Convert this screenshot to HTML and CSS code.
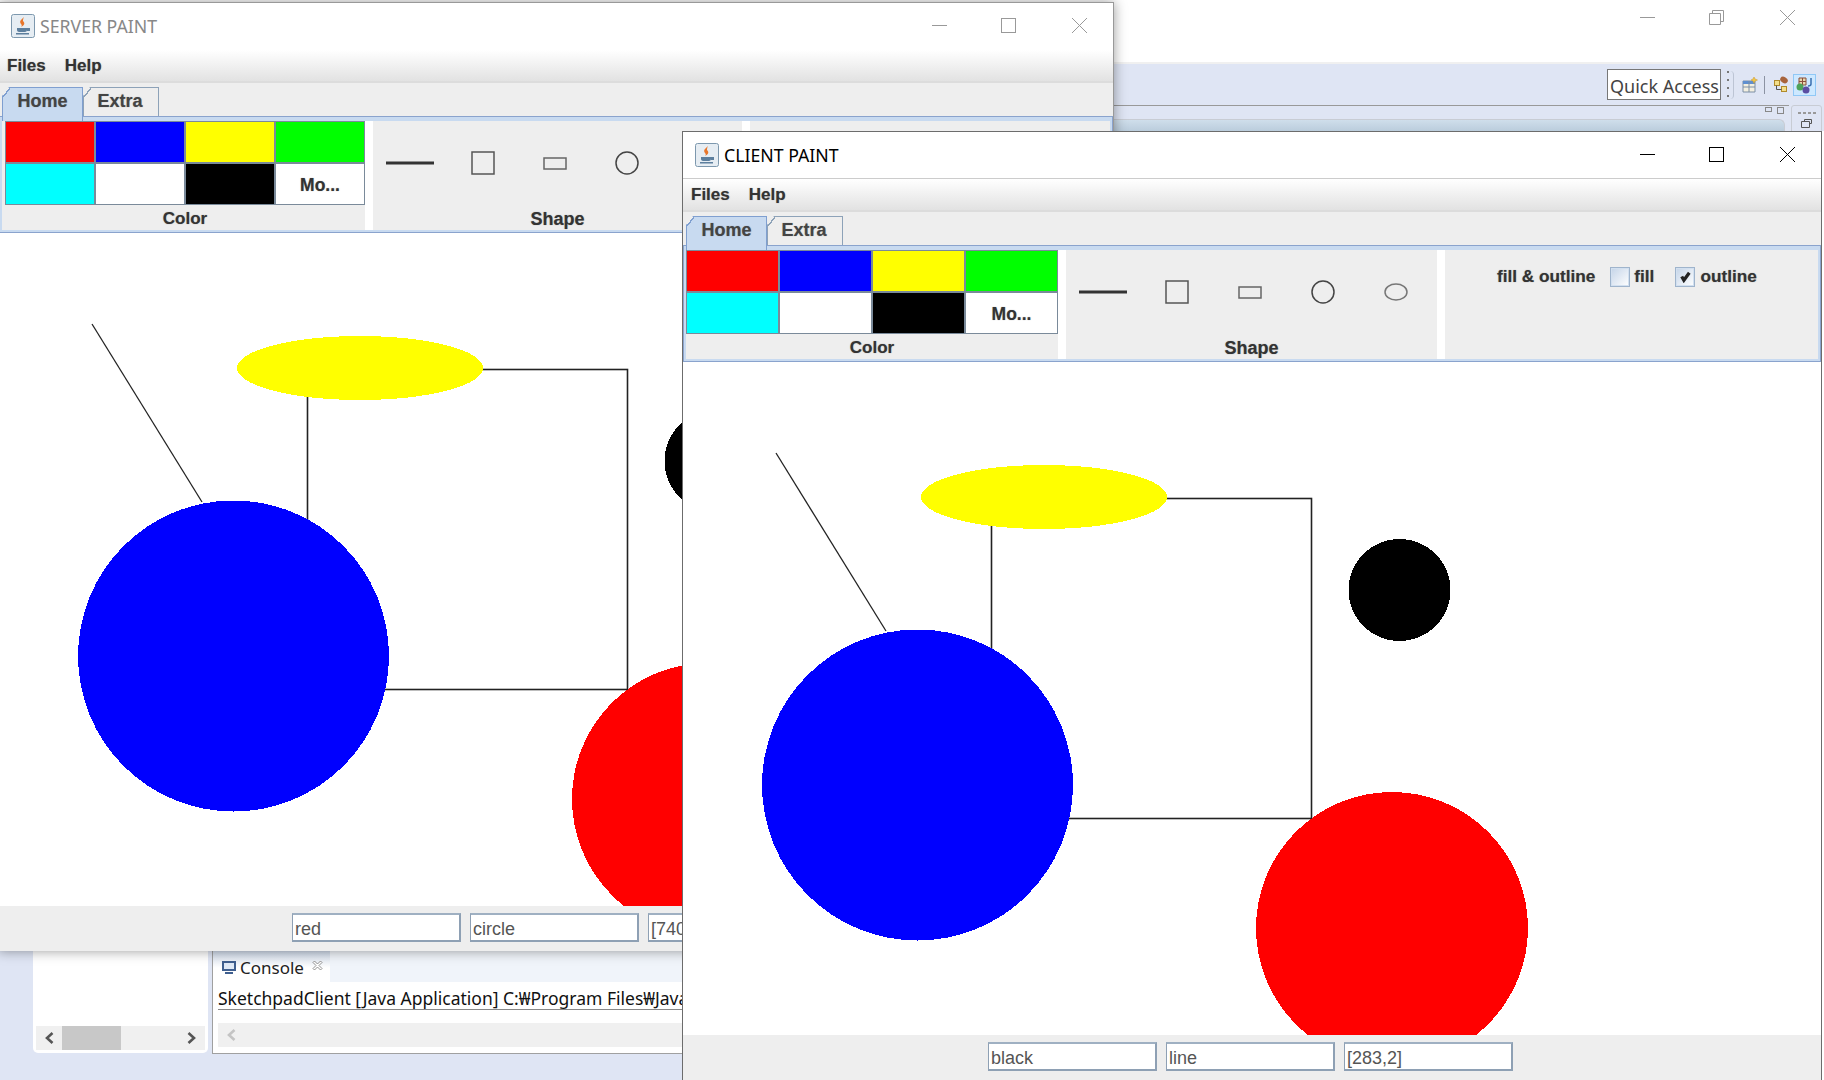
FILE: index.html
```html
<!DOCTYPE html>
<html lang="en">
<head>
    <meta charset="UTF-8">
    <title>Paint</title>
    <link rel="stylesheet" href="styles.css">
</head>
<body>
    <svg class="defs" width="0" height="0">
        <defs>
            <symbol id="drawing" viewBox="0 0 1140 673">
                <line x1="93" y1="91" x2="203" y2="269" stroke="#222" stroke-width="1.300"/>
                <rect x="308.500" y="136.500" width="320" height="320" fill="none" stroke="#222" stroke-width="1.600"/>
                <g shape-rendering="crispEdges">
                    <ellipse cx="361" cy="135" rx="123" ry="32" fill="#ffff00"/>
                    <circle cx="716.500" cy="228" r="51" fill="#000"/>
                    <circle cx="234.500" cy="423" r="155.500" fill="#0000ff"/>
                    <circle cx="709" cy="566" r="136" fill="#ff0000"/>
                </g>
            </symbol>
            <symbol id="java" viewBox="0 0 24 24">
                <rect x="0.500" y="0.500" width="23" height="23" rx="2" fill="#e6edf3" stroke="#7d98ae"/>
                <path d="M13 3c-3 3-5 4-3 7 1 1 1 2 0 3 4-2 4-4 2-6 0-1 0-2 1-4z" fill="#e8762b"/>
                <path d="M6 14h10v2c0 1-1 2-2 2H8c-1 0-2-1-2-2z M5 19h13v1.500H5z M16 14h3v3h-3" fill="#5d7f9e"/>
            </symbol>
            <symbol id="chev" viewBox="0 0 9 12">
                <path d="M7.500 1L2 6l5.500 5" fill="none" stroke="currentColor" stroke-width="2.600"/>
            </symbol>
        </defs>
    </svg>

    <!-- eclipse behind the two frames -->
    <div class="ide">
        <div class="ide-title">
            <span class="wbtn"><svg width="15" height="15"><line x1="0" y1="7.500" x2="15" y2="7.500" stroke="#999"/></svg></span>
            <span class="wbtn"><svg width="15" height="15"><path d="M3.500 3.500V.5h11v11h-3M.5 3.500h11v11H.5z" fill="none" stroke="#999"/></svg></span>
            <span class="wbtn"><svg width="15" height="15"><path d="M0 0l15 15M15 0L0 15" stroke="#999"/></svg></span>
        </div>
        <div class="ide-toolbar">
            <div class="quick">Quick Access</div>
            <span class="grip"></span>
            <svg class="tool" width="16" height="16" viewBox="0 0 16 16"><path d="M1 4h12v11H1z" fill="#f3efe0" stroke="#7d8fa5"/><path d="M1 4h12v3H1z" fill="#5f8fd0"/><path d="M7 4v11M1 10h12" stroke="#7d8fa5"/><path d="M12 0l1 2 2.500 1-2.500 1-1 2.500-1-2.500-2-1 2-1z" fill="#f2c744" stroke="#c9952a" stroke-width="0.500"/></svg>
            <span class="tool-sep"></span>
            <svg class="tool tool-tree" width="16" height="16" viewBox="0 0 16 16"><rect x="2.500" y="4.500" width="5" height="5" fill="#f3df8b" stroke="#b08a2c"/><rect x="9.500" y="10.500" width="5" height="5" fill="#f3df8b" stroke="#b08a2c"/><path d="M4.500 9.500v4h5" fill="none" stroke="#555"/><ellipse cx="12" cy="4" rx="4" ry="3" fill="#a8643c" transform="rotate(30 12 4)"/></svg>
            <span class="tool-on"><svg width="18" height="18" viewBox="0 0 18 18"><path d="M3 2h7v7H3z" fill="#e7d9b0" stroke="#8a4f3a"/><path d="M6.500 2v7M3 5.500h7" stroke="#8a4f3a"/><circle cx="4" cy="11" r="3.500" fill="#4ea35a"/><circle cx="10" cy="14" r="3.500" fill="#5a4ea3"/><path d="M15 2v6c0 2-2 2-3 2" fill="none" stroke="#3a6fb0" stroke-width="1.500"/></svg></span>
        </div>
        <div class="ide-rest">
            <div class="ide-side">
                <div class="side-dots"></div>
                <svg width="12" height="9" viewBox="0 0 12 9"><path d="M3.500 2.500V.5h7v4h-2M.5 2.500h8v6h-8z" fill="none" stroke="#555"/></svg>
            </div>
            <div class="ide-head">
                <span class="mini mini-min"></span>
                <span class="mini mini-max"></span>
            </div>
            <div class="ide-band"></div>
        </div>

        <div class="pkg">
            <div class="pkg-fill"></div>
            <div class="hscroll pkg-scroll">
                <span class="arrow"><svg width="9" height="12"><use href="#chev"/></svg></span>
                <span class="thumb"></span>
                <span class="arrow arrow-right"><svg width="9" height="12"><use href="#chev"/></svg></span>
            </div>
        </div>
        <div class="console">
            <div class="console-tabs">
                <div class="console-tab">
                    <svg width="14" height="14" viewBox="0 0 14 14"><rect x="1" y="1" width="12" height="8" fill="#dfe9f6" stroke="#3f5f8f" stroke-width="2"/><path d="M3 11h8v2H3z" fill="#3f5f8f"/></svg>
                    <span>Console</span>
                    <svg class="tab-x" width="11" height="11" viewBox="0 0 11 11"><path d="M1 2.500L2.500 1l3 3 3-3L10 2.500l-3 3 3 3L8.500 10l-3-3-3 3L1 8.500l3-3z" fill="#fff" stroke="#777" stroke-width="0.800"/></svg>
                </div>
            </div>
            <div class="console-name">SketchpadClient [Java Application] C:&#8361;Program Files&#8361;Java</div>
            <div class="hscroll console-scroll"><span class="arrow arrow-off"><svg width="9" height="12"><use href="#chev"/></svg></span></div>
        </div>
    </div>

    <!-- server frame -->
    <div class="frame frame-server">
        <div class="titlebar">
            <svg class="java" width="24" height="24"><use href="#java"/></svg>
            <span class="title">SERVER PAINT</span>
            <span class="wbtns">
                <span class="wbtn"><svg width="15" height="15"><line x1="0" y1="7.500" x2="15" y2="7.500" stroke="#999"/></svg></span>
                <span class="wbtn"><svg width="15" height="15"><rect x="0.500" y="0.500" width="14" height="14" fill="none" stroke="#999"/></svg></span>
                <span class="wbtn"><svg width="15" height="15"><path d="M0 0l15 15M15 0L0 15" stroke="#999"/></svg></span>
            </span>
        </div>
        <div class="menubar"><span>Files</span><span>Help</span></div>
        <div class="tabs"><span class="tab tab-on">Home</span><span class="tab">Extra</span></div>
        <div class="ribbon">
            <div class="panel panel-color">
                <div class="swatches">
                    <span class="red"></span><span class="blue"></span><span class="yellow"></span><span class="green"></span>
                    <span class="cyan"></span><span class="white"></span><span class="black"></span><span class="white more">Mo...</span>
                </div>
                <div class="panel-label">Color</div>
            </div>
            <div class="panel panel-shape">
                <div class="shapes">
                    <svg width="48" height="24"><line x1="0" y1="12" x2="48" y2="12" stroke="#333" stroke-width="3"/></svg>
                    <svg width="24" height="24"><rect x="1" y="1" width="22" height="22" fill="none" stroke="#555" stroke-width="1.500"/></svg>
                    <svg width="24" height="24"><rect x="1" y="7" width="22" height="11" fill="none" stroke="#666" stroke-width="1.500"/></svg>
                    <svg width="24" height="24"><circle cx="12" cy="12" r="11" fill="none" stroke="#444" stroke-width="1.500"/></svg>
                    <svg width="24" height="24"><ellipse cx="12" cy="12" rx="11" ry="8" fill="none" stroke="#777" stroke-width="1.500"/></svg>
                </div>
                <div class="panel-label panel-label-wide">Shape</div>
            </div>
            <div class="panel panel-fill"></div>
        </div>
        <svg class="canvas" width="1140" height="673"><use href="#drawing"/></svg>
        <div class="statusbar">
            <span class="field">red</span><span class="field">circle</span><span class="field">[740,311]</span>
        </div>
    </div>

    <!-- client frame -->
    <div class="frame frame-client">
        <div class="titlebar">
            <svg class="java" width="24" height="24"><use href="#java"/></svg>
            <span class="title">CLIENT PAINT</span>
            <span class="wbtns">
                <span class="wbtn"><svg width="15" height="15"><line x1="0" y1="7.500" x2="15" y2="7.500" stroke="#000"/></svg></span>
                <span class="wbtn"><svg width="15" height="15"><rect x="0.500" y="0.500" width="14" height="14" fill="none" stroke="#000"/></svg></span>
                <span class="wbtn"><svg width="15" height="15"><path d="M0 0l15 15M15 0L0 15" stroke="#000"/></svg></span>
            </span>
        </div>
        <div class="menubar"><span>Files</span><span>Help</span></div>
        <div class="tabs"><span class="tab tab-on">Home</span><span class="tab">Extra</span></div>
        <div class="ribbon">
            <div class="panel panel-color">
                <div class="swatches">
                    <span class="red"></span><span class="blue"></span><span class="yellow"></span><span class="green"></span>
                    <span class="cyan"></span><span class="white"></span><span class="black"></span><span class="white more">Mo...</span>
                </div>
                <div class="panel-label">Color</div>
            </div>
            <div class="panel panel-shape">
                <div class="shapes">
                    <svg width="48" height="24"><line x1="0" y1="12" x2="48" y2="12" stroke="#333" stroke-width="3"/></svg>
                    <svg width="24" height="24"><rect x="1" y="1" width="22" height="22" fill="none" stroke="#555" stroke-width="1.500"/></svg>
                    <svg width="24" height="24"><rect x="1" y="7" width="22" height="11" fill="none" stroke="#666" stroke-width="1.500"/></svg>
                    <svg width="24" height="24"><circle cx="12" cy="12" r="11" fill="none" stroke="#444" stroke-width="1.500"/></svg>
                    <svg width="24" height="24"><ellipse cx="12" cy="12" rx="11" ry="8" fill="none" stroke="#777" stroke-width="1.500"/></svg>
                </div>
                <div class="panel-label panel-label-wide">Shape</div>
            </div>
            <div class="panel panel-fill">
                <div class="fill-row">
                    <span class="fill-name">fill &amp; outline</span>
                    <span class="check"></span><span class="fill-opt">fill</span>
                    <span class="check check-on">
                        <svg width="13" height="13" viewBox="0 0 12 12"><path d="M2.500 6l2 3.500L9.500 2.500" fill="none" stroke="#222" stroke-width="3"/></svg>
                    </span><span>outline</span>
                </div>
            </div>
        </div>
        <svg class="canvas" width="1140" height="673"><use href="#drawing"/></svg>
        <div class="statusbar">
            <span class="field">black</span><span class="field">line</span><span class="field">[283,2]</span>
        </div>
    </div>
</body>
</html>
```
FILE: styles.css
```css
html, body {
    margin: 0;
    height: 100%;
    overflow: hidden;
}
body {
    position: relative;
    width: 1824px;
    height: 1080px;
    background-color: #dfe5f4;
    font-family: "Liberation Sans", Arial, sans-serif;
}
.defs {
    position: absolute;
}

/* eclipse */
.ide {
    position: absolute;
    inset: 0;
    display: flex;
    flex-direction: column;
    font-family: "Noto Sans", sans-serif;
}
.ide-title {
    height: 64px;
    flex: none;
    background-color: #fff;
    display: flex;
    justify-content: flex-end;
    align-items: flex-start;
    padding: 8px 29px 0 0;
    box-sizing: border-box;
    gap: 54px;
    border-bottom: 2px solid #f0f0f0;
}
.ide-toolbar {
    height: 41px;
    flex: none;
    display: flex;
    align-items: flex-start;
    justify-content: flex-end;
    padding: 5px 8px 0 0;
    box-sizing: border-box;
}
.quick {
    width: 114px;
    height: 31px;
    box-sizing: border-box;
    border: 1px solid #777;
    background-color: #fff;
    color: #444;
    font-size: 18px;
    line-height: 32px;
    padding-left: 2px;
    white-space: nowrap;
    overflow: hidden;
}
.grip {
    width: 7px;
    height: 28px;
    margin: 2px 8px 0 6px;
    box-sizing: border-box;
    border-right: 1px solid #bcc4d4;
    border-radius: 0 4px 4px 0;
    background: repeating-linear-gradient(#777 0 2px, transparent 2px 8px) left top / 2px 100% no-repeat;
}
.tool {
    margin-top: 8px;
    flex: none;
}
.tool-tree {
    margin-top: 7px;
}
.tool-sep {
    width: 1px;
    height: 18px;
    margin: 7px 7px 0 6px;
    background-color: #8c93a3;
}
.tool-on {
    width: 23px;
    height: 22px;
    margin: 5px 0 0 5px;
    box-sizing: border-box;
    background-color: #cde8ff;
    border: 1px solid #90c8f6;
    display: flex;
    align-items: center;
    justify-content: center;
}
.ide-rest {
    flex: 1;
    position: relative;
    border-top: 1px solid #999;
    margin-right: 35px;
}
.ide-head {
    height: 12px;
    display: flex;
    justify-content: flex-end;
    gap: 5px;
    padding: 1px 5px 0 0;
}
.mini {
    width: 5px;
    height: 3px;
    border: 1px solid #888;
}
.mini-max {
    height: 5px;
}
.ide-band {
    height: 14px;
    margin-right: 4px;
    border: 1px solid #c8ccd4;
    border-bottom: 0;
    border-radius: 6px 6px 0 0;
    background: linear-gradient(#cfdeeb, #b5c8d8);
}
.ide-side {
    position: absolute;
    top: -1px;
    right: -33px;
    width: 31px;
    height: 60px;
    border: 1px solid #c8ccd4;
    border-radius: 3px;
    box-sizing: border-box;
    display: flex;
    flex-direction: column;
    align-items: center;
    gap: 5px;
    padding-top: 6px;
}
.side-dots {
    width: 18px;
    height: 2px;
    background: repeating-linear-gradient(90deg, #999 0 3px, transparent 3px 5px);
}
.pkg {
    position: absolute;
    left: 33px;
    top: 951px;
    width: 175px;
    height: 102px;
    background-color: #fff;
    border-radius: 0 0 5px 5px;
    display: flex;
    flex-direction: column;
}
.pkg-fill {
    flex: 1;
}
.hscroll {
    background-color: #f0f0f0;
    display: flex;
    align-items: center;
    height: 24px;
    flex: none;
}
.pkg-scroll {
    margin: 0 3px 3px 3px;
}
.arrow {
    width: 26px;
    display: flex;
    justify-content: center;
    color: #555;
}
.arrow-right {
    margin-left: auto;
    transform: scaleX(-1);
}
.arrow-off {
    color: #c4c4c4;
}
.thumb {
    width: 59px;
    height: 24px;
    background-color: #c8c8c8;
}
.console {
    position: absolute;
    left: 212px;
    top: 951px;
    width: 600px;
    height: 103px;
    background-color: #fff;
    border: 1px solid #a0a0a0;
    border-top: 0;
    box-sizing: border-box;
}
.console-tabs {
    height: 31px;
    background-color: #f0f4fa;
}
.console-tab {
    width: 117px;
    height: 31px;
    box-sizing: border-box;
    background: linear-gradient(#cfdaea, #fff 55%);
    display: flex;
    align-items: center;
    gap: 4px;
    padding: 2px 0 0 9px;
    font-size: 17px;
    color: #222;
}
.tab-x {
    margin: -4px 0 0 4px;
}
.console-name {
    margin-left: 5px;
    height: 28px;
    line-height: 32px;
    font-size: 17.500px;
    color: #111;
    border-bottom: 1px solid #888;
    box-sizing: border-box;
    white-space: nowrap;
}
.console-scroll {
    margin: 13px 0 0 5px;
}

/* the swing frames */
.frame {
    position: absolute;
    height: 949px;
    box-sizing: border-box;
    display: flex;
    flex-direction: column;
    background-color: #fff;
    overflow: hidden;
    border: 1px solid #6c6c6c;
    border-bottom: 0;
}
.frame-server {
    left: -2px;
    top: 2px;
    width: 1116px;
    box-shadow: 0 0 12px rgba(0, 0, 0, 0.4);
    border-color: #999;
}
.frame-client {
    left: 682px;
    top: 131px;
    width: 1140px;
    box-shadow: 2px 0 0 #fff;
}
.titlebar {
    height: 47px;
    flex: none;
    box-sizing: border-box;
    border-bottom: 1px solid #ccc;
    display: flex;
    align-items: center;
    padding-left: 12px;
}
.frame-server .titlebar {
    border-bottom-color: #fff;
}
.java {
    flex: none;
    margin-right: 5px;
}
.title {
    font-family: "Noto Sans", sans-serif;
    font-size: 17.700px;
    color: #000;
}
.frame-server .title {
    color: #888;
}
.wbtns {
    margin-left: auto;
    display: flex;
    gap: 54px;
    padding: 0 26px 2px 0;
}
.wbtn {
    display: block;
    width: 15px;
    height: 15px;
}
.wbtn:last-child {
    margin-left: 2px;
}
.menubar {
    height: 33px;
    flex: none;
    box-sizing: border-box;
    background: linear-gradient(#fff, #e2e2e2);
    border-bottom: 2px solid #dcdcdc;
    display: flex;
    gap: 19px;
    padding: 6px 0 0 8px;
    font-weight: bold;
    font-size: 17px;
    color: #333;
    text-shadow: 0 0 1px rgba(51, 51, 51, 0.5);
}
.tabs {
    height: 33px;
    flex: none;
    box-sizing: border-box;
    background-color: #eee;
    display: flex;
    align-items: flex-start;
    padding: 4px 0 0 3px;
}
.tab {
    width: 76px;
    height: 29px;
    box-sizing: border-box;
    border: 1px solid #8da2b8;
    border-bottom: 0;
    padding-right: 2px;
    text-align: center;
    line-height: 27px;
    font-weight: bold;
    font-size: 18px;
    color: #444;
    text-shadow: 0 0 1px rgba(68, 68, 68, 0.5);
    clip-path: polygon(7px 0, 100% 0, 100% 100%, 0 100%, 0 9px);
    background: linear-gradient(to bottom right, transparent 44%, #8da2b8 44%, #8da2b8 56%, transparent 56%) 0 0 / 7px 9px no-repeat;
}
.tab-on {
    width: 81px;
    height: 34px;
    padding-right: 0;
    position: relative;
    z-index: 1;
    border-color: #7f9fd0;
    background: linear-gradient(to bottom right, transparent 44%, #7f9fd0 44%, #7f9fd0 56%, transparent 56%) 0 0 / 7px 9px no-repeat, linear-gradient(to bottom right, transparent 56%, #c8daf0 56%) 0 0 / 7px 9px no-repeat, linear-gradient(#c8daf0, #c8daf0) 7px 0 no-repeat, linear-gradient(#c8daf0, #c8daf0) 0 9px no-repeat;
}
.ribbon {
    height: 117px;
    flex: none;
    box-sizing: border-box;
    background-color: #eee;
    border: 5px solid #c8daf0;
    border-width: 5px 3px 3px;
    outline: 1px solid #8aa3cd;
    outline-offset: -1px;
    display: flex;
}
.panel {
    display: flex;
    flex-direction: column;
}
.panel-color {
    flex: 0 0 auto;
    width: 372px;
    margin-right: 8px;
    box-shadow: 8px 0 0 #fff;
}
.panel-shape {
    flex: 1;
    margin-right: 8px;
    box-shadow: 8px 0 0 #fff;
}
.panel-fill {
    flex: 0 0 373px;
    padding-top: 16px;
}
.frame-server .panel-color {
    width: 360px;
    margin-left: 3px;
}
.frame-server .panel-fill {
    flex-basis: 360px;
}
.swatches {
    display: grid;
    grid-template-columns: repeat(4, 1fr);
    grid-auto-rows: 42px;
    height: 84px;
    flex: none;
}
.swatches span {
    border: 1px solid #7a8a9a;
    display: block;
    text-align: center;
}
.red { background-color: #ff0000; }
.blue { background-color: #0000ff; }
.yellow { background-color: #ffff00; }
.green { background-color: #00ff00; }
.cyan { background-color: #00ffff; }
.white { background-color: #fff; }
.black { background-color: #000; }
.swatches .more {
    font-weight: bold;
    font-size: 17.500px;
    line-height: 42px;
    color: #333;
    text-shadow: 0 0 1px rgba(51, 51, 51, 0.5);
}
.panel-label {
    text-align: center;
    font-weight: bold;
    font-size: 17px;
    color: #333;
    line-height: 28px;
    text-shadow: 0 0 1px rgba(51, 51, 51, 0.5);
}
.panel-label-wide {
    font-size: 18px;
}
.shapes {
    height: 84px;
    flex: none;
    display: flex;
    align-items: flex-start;
    padding: 30px 0 0 13px;
    box-sizing: border-box;
    gap: 49px;
}
.frame-server .shapes {
    gap: 48px;
}
.shapes svg {
    flex: none;
}
.shapes svg:first-child {
    margin-right: -11px;
}
.fill-row {
    display: flex;
    align-items: center;
    font-weight: bold;
    font-size: 17.200px;
    color: #333;
    padding-left: 52px;
    text-shadow: 0 0 1px rgba(51, 51, 51, 0.5);
}
.check {
    width: 20px;
    height: 20px;
    box-sizing: border-box;
    border: 1px solid #9fb4cc;
    box-shadow: inset 0 0 0 1px #d2e0f0;
    background: linear-gradient(135deg, #c4d4e8, #fff);
    margin: 0 4px 0 15px;
    display: flex;
    align-items: center;
    justify-content: center;
}
.check-on {
    margin: 0 5px 0 21px;
}
.canvas {
    flex: none;
    display: block;
}
.statusbar {
    flex: 1;
    background-color: #eee;
    display: flex;
    justify-content: center;
    gap: 9px;
    padding: 7px 3px 0 0;
    box-sizing: border-box;
}
.field {
    width: 169px;
    height: 29px;
    box-sizing: border-box;
    border-style: solid;
    border-width: 2px 2px 2px 1px;
    border-color: #9fb0c2 #8ea0b4 #8ea0b4 #8ea0b4;
    background-color: #fff;
    font-size: 18px;
    line-height: 28px;
    padding-left: 2px;
    color: #555;
    overflow: hidden;
    white-space: nowrap;
}
```
